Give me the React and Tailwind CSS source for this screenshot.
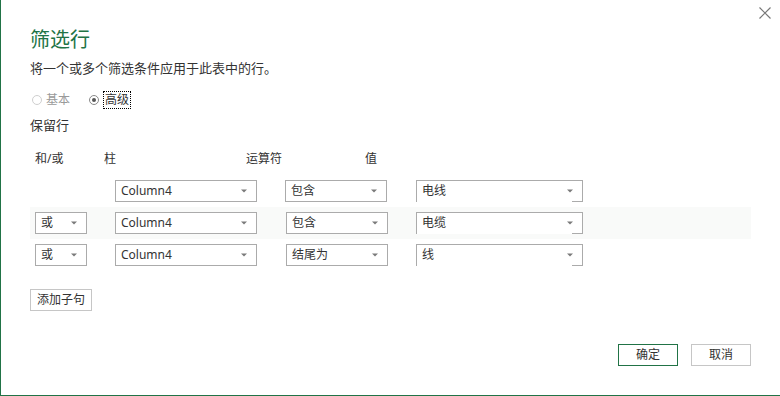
import React from 'react';

const font = { fontFamily: '"Noto Sans", "Noto Sans CJK SC", sans-serif' };

const Arrow = () => (
  <svg width="6" height="4" viewBox="0 0 6 4" className="shrink-0">
    <path d="M0 0.5 L6 0.5 L3 3.5 Z" fill="#7a7a7a" />
  </svg>
);

const Combo = ({ value, width }) => (
  <div
    className={`${width} h-[22px] flex items-center justify-between border border-[#ababab] bg-white pl-[5px] pr-[9px] text-[12px] text-[#333]`}
  >
    <span>{value}</span>
    <Arrow />
  </div>
);

// editable combo: bottom edge only drawn near the arrow
const EditCombo = ({ value }) => (
  <div className="w-[167px] h-[22px] flex flex-col border-t border-x border-[#ababab] bg-white text-[12px] text-[#333]">
    <div className="flex-1 flex items-center justify-between pl-[5px] pr-[9px]">
      <span>{value}</span>
      <Arrow />
    </div>
    <div className="flex justify-end">
      <div className="w-[10px] h-px bg-[#ababab]" />
    </div>
  </div>
);

const rows = [
  { andor: null, col: 'Column4', op: '包含', val: '电线', shaded: false },
  { andor: '或', col: 'Column4', op: '包含', val: '电缆', shaded: true },
  { andor: '或', col: 'Column4', op: '结尾为', val: '线', shaded: false },
];

export default function App() {
  return (
    <div
      className="w-[780px] h-[396px] bg-white border-l border-b border-[#217346] flex flex-col overflow-hidden"
      style={font}
    >
      <div className="flex justify-end pt-[7px] pr-[9px] h-[28px]">
        <svg width="12" height="12" viewBox="0 0 12 12">
          <path d="M0.5 0.5 L11.5 11.5 M11.5 0.5 L0.5 11.5" stroke="#777" strokeWidth="1.2" />
        </svg>
      </div>

      <div className="pl-[29px] pr-[29px] flex flex-col">
        <h1 className="text-[20px] leading-[24px] text-[#217346] font-normal">筛选行</h1>
        <p className="mt-[7px] text-[13px] leading-[18px] text-[#333]">将一个或多个筛选条件应用于此表中的行。</p>

        <div className="mt-[14px] flex items-center h-[18px] text-[12px]">
          <div className="flex items-center gap-[4px] text-[#9a9a9a]">
            <span className="ml-[2px] w-[10px] h-[10px] rounded-full border border-[#cfcfcf]" />
            <span>基本</span>
          </div>
          <div className="ml-[19px] flex items-center gap-[4px] text-[#333]">
            <span className="w-[10px] h-[10px] rounded-full border border-[#8a8a8a] flex items-center justify-center">
              <span className="w-[4px] h-[4px] rounded-full bg-[#555]" />
            </span>
            <span className="border border-dotted border-black px-px leading-[16px]">高级</span>
          </div>
        </div>

        <p className="mt-[8px] text-[13px] leading-[16px] text-[#333]">保留行</p>

        <div className="mt-[18px] flex text-[12px] leading-[16px] text-[#333]">
          <span className="ml-[5px] w-[69px]">和/或</span>
          <span className="w-[142px]">柱</span>
          <span className="w-[119px]">运算符</span>
          <span>值</span>
        </div>

        <div className="mt-[8px] flex flex-col">
          {rows.map((r, i) => (
            <div
              key={i}
              className={`h-[32px] flex items-center pl-[5px] ${r.shaded ? 'bg-[#f9faf9]' : ''}`}
            >
              <div className="w-[52px]">{r.andor && <Combo value={r.andor} width="w-[52px]" />}</div>
              <div className="ml-[28px]">
                <Combo value={r.col} width="w-[142px]" />
              </div>
              <div className={i === 0 ? 'ml-[28px]' : 'ml-[29px]'}>
                <Combo value={r.op} width="w-[102px]" />
              </div>
              <div className={i === 0 ? 'ml-[29px]' : 'ml-[28px]'}>
                <EditCombo value={r.val} />
              </div>
            </div>
          ))}
        </div>

        <div className="mt-[15px]">
          <button className="h-[22px] w-[62px] border border-[#c6c6c6] bg-white text-[12px] text-[#333]">
            添加子句
          </button>
        </div>

        <div className="mt-[33px] flex justify-end gap-[13px]">
          <button className="h-[22px] w-[60px] border border-[#217346] bg-white text-[12px] text-[#333]">
            确定
          </button>
          <button className="h-[22px] w-[60px] border border-[#c6c6c6] bg-white text-[12px] text-[#333]">
            取消
          </button>
        </div>
      </div>
    </div>
  );
}
